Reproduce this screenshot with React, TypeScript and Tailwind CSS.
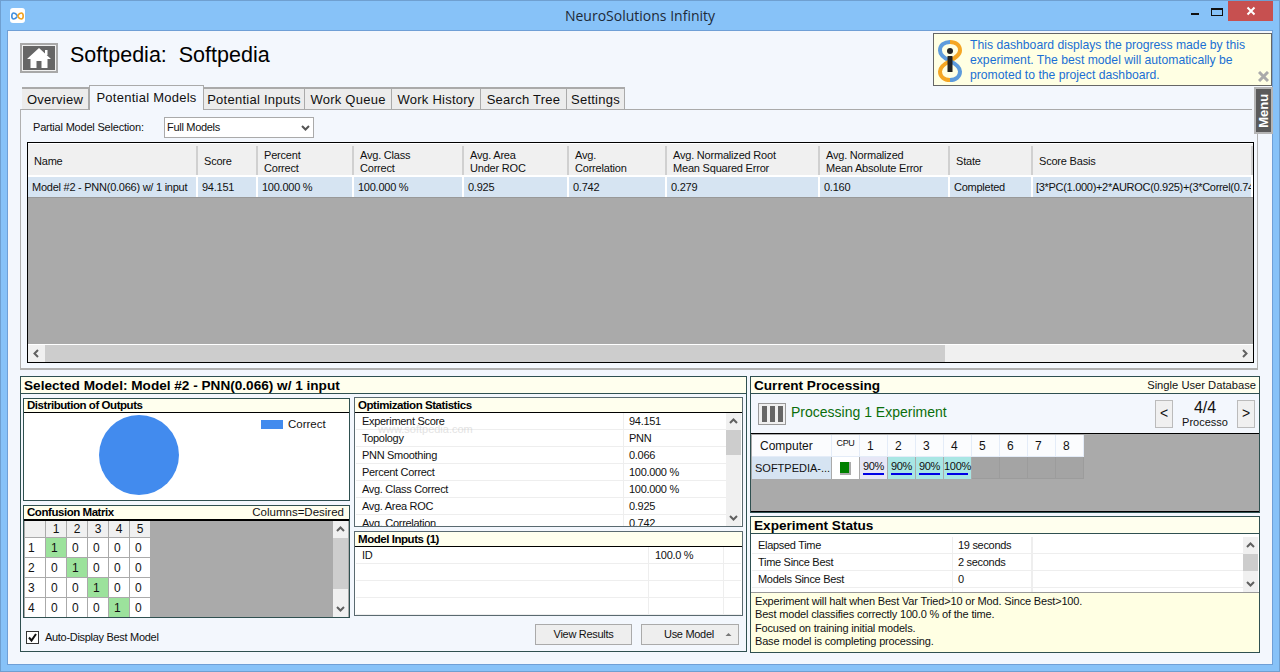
import React from "react";

const topCols = ["Name", "Score", "Percent\nCorrect", "Avg. Class\nCorrect", "Avg. Area\nUnder ROC", "Avg.\nCorrelation", "Avg. Normalized Root\nMean Squared Error", "Avg. Normalized\nMean Absolute Error", "State", "Score Basis"];
const topRow = ["Model #2 - PNN(0.066) w/ 1 input", "94.151", "100.000 %", "100.000 %", "0.925", "0.742", "0.279", "0.160", "Completed", "[3*PC(1.000)+2*AUROC(0.925)+(3*Correl(0.742)"];
const tabs = ["Overview", "Potential Models", "Potential Inputs", "Work Queue", "Work History", "Search Tree", "Settings"];
const tabWidths = ["w-[67px]", "w-[115px]", "w-[101px]", "w-[87px]", "w-[89px]", "w-[86px]", "w-[58px]"];
const stats = [
  ["Experiment Score", "94.151"],
  ["Topology", "PNN"],
  ["PNN Smoothing", "0.066"],
  ["Percent Correct", "100.000 %"],
  ["Avg. Class Correct", "100.000 %"],
  ["Avg. Area ROC", "0.925"],
  ["Avg. Correlation", "0.742"],
];
const status = [
  ["Elapsed Time", "19 seconds"],
  ["Time Since Best", "2 seconds"],
  ["Models Since Best", "0"],
  ["", ""],
];

function Chevron({ dir }: { dir: "up" | "down" | "left" | "right" }) {
  const d = {
    up: "M2 7 L5.5 3.5 L9 7",
    down: "M2 4 L5.5 7.5 L9 4",
    left: "M7 2 L3.5 5.5 L7 9",
    right: "M4 2 L7.5 5.5 L4 9",
  }[dir];
  return (
    <svg width="11" height="11" viewBox="0 0 11 11" fill="none" stroke="#606060" strokeWidth="2">
      <path d={d} />
    </svg>
  );
}

function VScroll({ before, thumb }: { before: string; thumb: string }) {
  return (
    <div className="w-[15px] h-full flex flex-col bg-[#f0f0f0] shrink-0">
      <div className={`${before} flex items-center justify-center shrink-0`}>
        <Chevron dir="up" />
      </div>
      <div className={`${thumb} bg-[#cdcdcd] shrink-0`} />
      <div className="flex-1" />
      <div className="h-[17px] flex items-center justify-center shrink-0">
        <Chevron dir="down" />
      </div>
    </div>
  );
}

function SubHeader({ title, right, tall }: { title: string; right?: string; tall?: boolean }) {
  return (
    <div className={`${tall ? "h-[13px] pt-[1px]" : "h-[13px]"} bg-[#ffffee] border-b border-black flex items-center justify-between pl-[3px] pr-[5px] shrink-0 box-content`}>
      <span className="text-[11.5px] leading-[13px] font-bold tracking-[-0.45px] text-black">{title}</span>
      {right && <span className="text-[11.5px] leading-[13px] text-[#111]">{right}</span>}
    </div>
  );
}

function BigHeader({ title, right }: { title: string; right?: string }) {
  return (
    <div className="h-[16px] bg-[#ffffee] border-b border-[#2f5050] flex items-center justify-between pl-[3px] pr-[3px] shrink-0 box-content">
      <span className="text-[13.6px] leading-[16px] font-bold text-black mt-[2px]">{title}</span>
      {right && <span className="text-[11.2px] leading-[16px] text-[#111]">{right}</span>}
    </div>
  );
}

function HomeIcon() {
  return (
    <svg width="26" height="22" viewBox="0 0 26 22">
      <path d="M13 1 L25 12 L21.5 12 L21.5 21 L15.5 21 L15.5 14 L10.5 14 L10.5 21 L4.5 21 L4.5 12 L1 12 Z" fill="#fff" />
      <rect x="19" y="3" width="2.5" height="5" fill="#fff" />
    </svg>
  );
}

function AppIcon() {
  return (
    <div className="w-[15px] h-[15px] rounded-[3px] bg-white flex items-center justify-center">
      <svg width="13" height="8" viewBox="0 0 13 8" fill="none" strokeWidth="1.6">
        <path d="M6.5 4 C5 1.5 3.8 1 2.8 1 C1.6 1 0.8 2.3 0.8 4 C0.8 5.7 1.6 7 2.8 7 C3.8 7 5 6.5 6.5 4" stroke="#3f8fe0" />
        <path d="M6.5 4 C8 1.5 9.2 1 10.2 1 C11.4 1 12.2 2.3 12.2 4 C12.2 5.7 11.4 7 10.2 7 C9.2 7 8 6.5 6.5 4" stroke="#f2a11c" />
      </svg>
    </div>
  );
}

function InfoIcon() {
  return (
    <svg width="24" height="42" viewBox="0 0 24 42" fill="none" className="shrink-0">
      <path d="M12 21 C4 17 2 14 2 10.5 C2 5 6.5 2 12 2" stroke="#5d9bdc" strokeWidth="4" />
      <path d="M12 2 C18 2 22 5.5 22 10.5 C22 15 17 18 12 21" stroke="#f5a623" strokeWidth="4" />
      <path d="M12 21 C6 24 2 27 2 31.5 C2 36.5 6 40 12 40" stroke="#f5a623" strokeWidth="4" />
      <path d="M12 40 C18 40 22 36.5 22 31.5 C22 27 18 24 12 21" stroke="#5d9bdc" strokeWidth="4" />
      <circle cx="12" cy="11" r="3" fill="#222" />
      <rect x="9.5" y="16" width="5" height="16" fill="#222" />
    </svg>
  );
}

export default function App() {
  return (
    <div className="relative w-[1280px] h-[672px] overflow-hidden bg-[#87c2f8] border border-[#6f9fd0] font-['Liberation_Sans',Arial,sans-serif] text-[12px] text-[#111]">
      {/* title bar */}
      <div className="relative h-[29px] flex items-start justify-center">
        <div className="absolute left-[9px] top-[7px]"><AppIcon /></div>
        <span className="mt-[6px] font-['Open_Sans',sans-serif] text-[14px] leading-[18px] text-[#1d2a38]">NeuroSolutions Infinity</span>
        <div className="absolute right-[6px] top-0 flex items-start">
          <div className="w-[18px] h-[3px] mt-[12px] mr-[7px] flex justify-center"><div className="w-[8px] h-[2px] bg-[#111]" /></div>
          <div className="w-[12px] h-[8px] mt-[7px] mr-[5px] border border-[#111] border-t-2" />
          <div className="w-[45px] h-[20px] bg-[#c75050] flex items-center justify-center">
            <svg width="10" height="10" viewBox="0 0 10 10" stroke="#fff" strokeWidth="2"><path d="M1.5 1.5 L8.5 8.5 M8.5 1.5 L1.5 8.5" /></svg>
          </div>
        </div>
      </div>

      {/* client */}
      <div className="relative ml-[6px] w-[1266px] h-[635px] bg-[#f3f7fd] border border-[#6f9fd6] pl-[12px] box-border">
        {/* header */}
        <div className="h-[55px] flex items-start">
          <div className="mt-[12px] w-[38px] h-[30px] border-2 border-[#a8a8a8] bg-[#f0f0f0] p-[1px] flex">
            <div className="flex-1 bg-[#666] flex items-center justify-center"><HomeIcon /></div>
          </div>
          <span className="ml-[12px] mt-[10px] text-[21.5px] leading-[28px] text-black">Softpedia:&nbsp; Softpedia</span>
        </div>

        {/* tabs */}
        <div className="h-[24px] w-[1232px] flex items-end pl-[2px] border-b border-[#aaa]">
          {tabs.map((t, i) =>
            i === 1 ? (
              <div key={t} className={`${tabWidths[i]} h-[25px] -mb-[1px] bg-[#f3f7fd] border border-b-0 border-[#aaa] text-[13px] tracking-[0.25px] flex items-center justify-center relative`}>{t}</div>
            ) : (
              <div key={t} className={`${tabWidths[i]} h-[22px] bg-[#ececec] border-y border-r border-t-2 border-[#aaa] border-b-0 text-[13px] tracking-[0.25px] pt-[2px] flex items-center justify-center`}>{t}</div>
            )
          )}
        </div>

        {/* tab panel */}
        <div className="w-[1238px] h-[261px] border-x border-b-2 border-[#b0b0b0] pl-[6px] pr-[3px] box-border -mt-[1px]">
          <div className="h-[33px] flex items-center pt-[4px]">
            <span className="ml-[6px] w-[131px] text-[11px] tracking-[-0.2px]">Partial Model Selection:</span>
            <div className="w-[150px] h-[21px] border border-[#aaa] bg-white flex items-center justify-between pl-[2px] pr-[2px] text-[11px] tracking-[-0.3px]">
              <span>Full Models</span>
              <svg width="11" height="11" viewBox="0 0 11 11" fill="none" stroke="#555" strokeWidth="2"><path d="M2 4 L5.5 7.5 L9 4" /></svg>
            </div>
          </div>
          <div className="w-[1227px] h-[221px] border border-black bg-[#aaa] flex flex-col overflow-hidden">
            <div className="h-[34px] bg-[#f0f0f0] border-b-2 border-[#b5b5b5] grid grid-cols-[170px_60px_96px_110px_105px_98px_153px_130px_83px_220px] pt-[2px] shrink-0 border-t border-white">
              {topCols.map((c, i) => (
                <div key={c} className={`border-r-2 border-[#d0d0d0] pl-[6px] pt-[2px] flex items-center text-[11px] tracking-[-0.2px] leading-[13px] whitespace-pre ${i === 9 ? "border-r-0" : ""}`}>{c}</div>
              ))}
            </div>
            <div className="h-[21px] bg-[#d6e4f2] border-b border-[#999] grid grid-cols-[170px_60px_96px_110px_105px_98px_153px_130px_83px_220px] shrink-0">
              {topRow.map((c, i) => (
                <div key={i} className={`border-r-2 border-white flex items-center text-[11px] whitespace-nowrap overflow-hidden ${i === 9 ? "border-r-0 pl-[3px] tracking-[-0.3px]" : "pl-[4px] tracking-[-0.25px]"}`}>{c}</div>
              ))}
            </div>
            <div className="flex-1" />
            <div className="h-[17px] border-t border-white bg-[#f0f0f0] flex shrink-0 box-content">
              <div className="w-[17px] flex items-center justify-center"><Chevron dir="left" /></div>
              <div className="w-[900px] bg-[#cdcdcd]" />
              <div className="flex-1" />
              <div className="w-[17px] flex items-center justify-center"><Chevron dir="right" /></div>
            </div>
          </div>
        </div>

        {/* bottom */}
        <div className="mt-[6px] flex gap-[3px] h-[277px]">
          {/* selected model */}
          <div className="w-[727px] h-[276px] border border-[#2f5050] flex flex-col">
            <BigHeader title="Selected Model: Model #2 - PNN(0.066) w/ 1 input" />
            <div className="flex gap-[4px] pl-[2px] pt-[4px]">
              <div className="w-[327px] flex flex-col">
                <div className="h-[103px] border border-[#2f5050] bg-white flex flex-col">
                  <SubHeader title="Distribution of Outputs" />
                  <div className="flex-1 flex items-center pl-[75px] pb-[4px] relative">
                    <div className="w-[80px] h-[80px] rounded-full bg-[#428bee]" />
                    <div className="ml-[82px] -mt-[60px] w-[22px] h-[9px] bg-[#428bee]" />
                    <span className="ml-[5px] -mt-[60px] text-[11.5px]">Correct</span>
                  </div>
                </div>
                <div className="mt-[4px] h-[113px] border border-[#2f5050] flex flex-col">
                  <SubHeader title="Confusion Matrix" right="Columns=Desired" />
                  <div className="flex-1 flex bg-[#aaa] border-t border-black overflow-hidden min-h-0">
                    <div className="w-[309px] pl-[1px]">
                      <div className="grid grid-cols-[21px_21px_21px_21px_21px_21px] grid-rows-[17px_20px_20px_20px_20px] w-[126px]">
                        {["", "1", "2", "3", "4", "5"].map((h, i) => (
                          <div key={i} className="bg-[#f0f0f0] border-r border-b border-[#aaa] text-[12px] flex items-center justify-center">{h}</div>
                        ))}
                        {[0, 1, 2, 3].map((r) => (
                          <React.Fragment key={r}>
                            <div className="bg-white border-r border-b border-[#aaa] pl-[3px] flex items-center text-[12px]">{r + 1}</div>
                            {[0, 1, 2, 3, 4].map((c) => (
                              <div key={c} className={`${r === c ? "bg-[#9ce29c]" : "bg-white"} border-r border-b border-[#aaa] pl-[5px] flex items-center text-[12px]`}>{r === c ? "1" : "0"}</div>
                            ))}
                          </React.Fragment>
                        ))}
                      </div>
                    </div>
                    <VScroll before="h-[17px]" thumb="h-[51px]" />
                  </div>
                </div>
                <div className="mt-[11px] ml-[3px] flex items-center">
                  <div className="w-[13px] h-[13px] border border-[#333] bg-white flex items-center justify-center">
                    <svg width="11" height="11" viewBox="0 0 11 11" fill="none" stroke="#111" strokeWidth="2"><path d="M2 5.5 L4.5 8.5 L9 2" /></svg>
                  </div>
                  <span className="ml-[6px] text-[11px] tracking-[-0.3px]">Auto-Display Best Model</span>
                </div>
              </div>

              <div className="relative w-[389px] flex flex-col -mt-[1px]">
                <div className="h-[130px] border border-[#5a6a70] bg-white flex flex-col">
                  <SubHeader title="Optimization Statistics" tall />
                  <div className="flex-1 flex overflow-hidden pl-[1px] min-h-0">
                    <div className="flex-1 overflow-hidden">
                      {stats.map(([a, b]) => (
                        <div key={a} className="h-[17px] flex border-b border-[#eee] text-[11px] tracking-[-0.3px] leading-[16px]">
                          <div className="w-[268px] pl-[6px] border-r border-[#eee]">{a}</div>
                          <div className="pl-[5px]">{b}</div>
                        </div>
                      ))}
                    </div>
                    <div className="mr-[1px] h-[113px]"><VScroll before="h-[17px]" thumb="h-[25px]" /></div>
                  </div>
                </div>
                <div className="absolute left-[24px] top-[24px] text-[11px] text-[#c8c8c8] opacity-50">www.softpedia.com</div>
                <div className="mt-[4px] h-[85px] border border-[#5a6a70] bg-white flex flex-col">
                  <SubHeader title="Model Inputs (1)" tall />
                  <div className="flex-1 pl-[1px] pr-[1px] overflow-hidden">
                    {[["ID", "100.0 %"], ["", ""], ["", ""], ["", ""]].map(([a, b], i) => (
                      <div key={i} className="h-[17px] flex border-b border-[#eee] text-[11px] tracking-[-0.3px] leading-[16px]">
                        <div className="w-[293px] pl-[6px] border-r border-[#eee]">{a}</div>
                        <div className="w-[75px] pl-[6px] border-r border-[#eee]">{b}</div>
                      </div>
                    ))}
                  </div>
                </div>
                <div className="mt-[8px] flex justify-end pr-[4px] gap-[9px]">
                  <div className="w-[97px] h-[21px] border border-[#aaa] bg-[#eeeeee] flex items-center justify-center text-[11px] tracking-[-0.3px]">View Results</div>
                  <div className="w-[98px] h-[21px] border border-[#aaa] bg-[#eeeeee] flex items-center text-[11px] tracking-[-0.3px] pl-[22px] relative">
                    Use Model
                    <svg className="absolute right-[6px] top-[7px]" width="7" height="5" viewBox="0 0 7 5"><path d="M0.5 4 L3.5 1 L6.5 4 Z" fill="#777" /></svg>
                  </div>
                </div>
              </div>
            </div>
          </div>

          {/* right column */}
          <div className="w-[510px] flex flex-col">
            <div className="h-[137px] border border-[#2f5050] flex flex-col">
              <BigHeader title="Current Processing" right="Single User Database" />
              <div className="h-[39px] flex items-center pl-[7px] pr-[4px] shrink-0">
                <div className="w-[28px] h-[22px] border border-[#999] bg-[#f0f0f0] flex items-center justify-center gap-[3px]">
                  <div className="w-[5px] h-[16px] bg-[#666]" />
                  <div className="w-[5px] h-[16px] bg-[#666]" />
                  <div className="w-[5px] h-[16px] bg-[#666]" />
                </div>
                <span className="ml-[5px] mb-[3px] text-[14px] text-[#0a6e0a]">Processing 1 Experiment</span>
                <div className="ml-auto flex items-center">
                  <div className="w-[18px] h-[28px] border border-[#bbb] bg-[#f0f0f0] flex items-center justify-center text-[14px]">&lt;</div>
                  <div className="w-[64px] flex flex-col items-center">
                    <span className="text-[16px] leading-[17px]">4/4</span>
                    <span className="text-[11px] leading-[13px]">Processo</span>
                  </div>
                  <div className="w-[18px] h-[28px] border border-[#bbb] bg-[#f0f0f0] flex items-center justify-center text-[14px]">&gt;</div>
                </div>
              </div>
              <div className="flex-1 bg-[#aaa] border-y border-black pl-[1px] pt-[1px]">
                <div className="grid grid-cols-[80px_28px_28px_28px_28px_28px_28px_28px_28px_28px] grid-rows-[22px_22px] w-[332px]">
                  <div className="bg-[#fbfcfe] border-r border-b border-[#e4ecf8] pl-[8px] flex items-center text-[12px]">Computer</div>
                  <div className="bg-[#fbfcfe] border-r border-b border-[#e4ecf8] flex items-center justify-center text-[9px] tracking-[-0.3px] pb-[3px]">CPU</div>
                  {[1, 2, 3, 4, 5, 6, 7, 8].map((n) => (
                    <div key={n} className="bg-[#fbfcfe] border-r border-b border-[#e4ecf8] flex items-center pl-[7px] text-[12px]">{n}</div>
                  ))}
                  <div className="bg-[#d6e4f2] border-r border-[#aaa] pl-[3px] flex items-center text-[11px] whitespace-nowrap overflow-hidden">SOFTPEDIA-...</div>
                  <div className="bg-white border-r border-[#aaa] flex items-center justify-center">
                    <div className="w-[11px] h-[13px] bg-[#008000] border-r-2 border-b-2 border-t-0 border-[#aaa]" />
                  </div>
                  {[["90%", "bg-[#e6e6f6]"], ["90%", "bg-[#a8e6e4]"], ["90%", "bg-[#a8e6e4]"], ["100%", "bg-[#a8e6e4]"]].map(([p, bg], i) => (
                    <div key={i} className={`${bg} border-r border-[#aaa] flex flex-col items-center text-[11px] leading-[12px] pt-[3px]`}>
                      <span className="tracking-[-0.3px]">{p}</span>
                      <div className="w-[21px] h-[2px] bg-[#0000e6] mt-[1px]" />
                    </div>
                  ))}
                  {[5, 6, 7, 8].map((n) => (
                    <div key={n} className="border border-l-0 border-t-0 border-[#9c9c9c] bg-[#a4a4a4]" />
                  ))}
                </div>
              </div>
            </div>

            <div className="mt-[3px] h-[137px] border border-[#2f5050] flex flex-col">
              <BigHeader title="Experiment Status" />
              <div className="h-[58px] flex bg-white overflow-hidden pl-[1px] pt-[3px] shrink-0">
                <div className="flex-1 overflow-hidden">
                  {status.map(([a, b], i) => (
                    <div key={i} className="h-[17px] flex border-b border-[#eee] text-[11px] tracking-[-0.3px] leading-[16px]">
                      <div className="w-[201px] pl-[6px] border-r border-[#eee]">{a}</div>
                      <div className="w-[80px] pl-[5px] border-r-2 border-[#eee]">{b}</div>
                    </div>
                  ))}
                </div>
                <div className="mr-[1px] h-[55px]"><VScroll before="h-[17px]" thumb="h-[17px]" /></div>
              </div>
              <div className="flex-1 bg-[#ffffe3] border-t border-[#999] pl-[4px] pt-[2px] text-[11px] leading-[13.3px] tracking-[-0.17px]">
                <div>Experiment will halt when Best Var Tried&gt;10 or Mod. Since Best&gt;100.</div>
                <div>Best model classifies correctly 100.0 % of the time.</div>
                <div>Focused on training initial models.</div>
                <div>Base model is completing processing.</div>
              </div>
            </div>
          </div>
        </div>

        {/* info overlay */}
        <div className="absolute left-[925px] top-[2px] w-[339px] h-[53px] border border-[#666] bg-[#ffffe3] flex pl-[4px]">
          <div className="mt-[6px]"><InfoIcon /></div>
          <div className="ml-[8px] mt-[4px] text-[12.2px] leading-[15px] text-[#1a6fd4] whitespace-nowrap">
            <div>This dashboard displays the progress made by this</div>
            <div>experiment. The best model will automatically be</div>
            <div>promoted to the project dashboard.</div>
          </div>
          <svg className="absolute right-[2px] bottom-[3px]" width="11" height="11" viewBox="0 0 11 11" stroke="#aaa" strokeWidth="3"><path d="M1 1 L10 10 M10 1 L1 10" /></svg>
        </div>

        {/* menu overlay */}
        <div className="absolute left-[1246px] top-[56px] w-[19px] h-[47px] border-2 border-[#b5b5b5] bg-[#5a5a5a] flex items-center justify-center">
          <span className="-rotate-90 text-white font-bold text-[13px] whitespace-nowrap">Menu</span>
        </div>
      </div>
    </div>
  );
}
